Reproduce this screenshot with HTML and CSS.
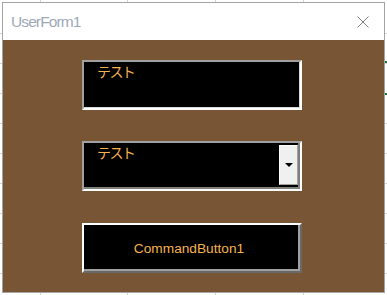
FILE: index.html
```html
<!DOCTYPE html>
<html lang="ja">
<head>
<meta charset="utf-8">
<title>UserForm1</title>
<link rel="stylesheet" href="styles.css">
</head>
<body>
<div class="window">
  <div class="titlebar">
    <span class="title">UserForm1</span>
    <svg class="close" width="12" height="12" viewBox="0 0 12 12" aria-hidden="true">
      <path d="M0.5 0.5 L11.5 11.5 M11.5 0.5 L0.5 11.5" stroke="#7c7c7c" stroke-width="1" fill="none"/>
    </svg>
  </div>
  <div class="client">
    <div class="textbox"><span class="jp">テスト</span></div>
    <div class="combo">
      <div class="combo-text"><span class="jp">テスト</span></div>
      <div class="drop"><span class="arrow"></span></div>
    </div>
    <div class="cmd">CommandButton1</div>
  </div>
</div>
</body>
</html>
```
FILE: styles.css
```css
html, body {
  margin: 0;
  padding: 0;
}
body {
  width: 387px;
  height: 295px;
  overflow: hidden;
  background-color: #ffffff;
  background-image:
    linear-gradient(#217346, #217346),
    linear-gradient(#217346, #217346),
    linear-gradient(#d4d4d4, #d4d4d4),
    linear-gradient(#d4d4d4, #d4d4d4),
    linear-gradient(#d4d4d4, #d4d4d4),
    linear-gradient(#d4d4d4, #d4d4d4),
    repeating-linear-gradient(180deg, transparent 0, transparent 29px, #d4d4d4 29px, #d4d4d4 30px);
  background-size: 10px 2px, 10px 2px, 1px 100%, 1px 100%, 1px 100%, 1px 100%, 100% 100%;
  background-position: 385px 61px, 385px 93px, 40px 0, 127px 0, 215px 0, 303px 0, 0 4px;
  background-repeat: no-repeat, no-repeat, no-repeat, no-repeat, no-repeat, no-repeat, repeat;
  font-family: "Liberation Sans", Arial, sans-serif;
}
.window {
  box-sizing: border-box;
  margin: 2px 0 0 2px;
  width: 383px;
  height: 291px;
  border: 1px solid #a4a4a4;
  background: #ffffff;
  display: flex;
  flex-direction: column;
}
.titlebar {
  height: 37px;
  flex: none;
  display: flex;
  align-items: center;
  justify-content: space-between;
  padding: 0 15px 0 8px;
}
.title {
  font-family: "Liberation Sans", Arial, sans-serif;
  font-size: 15.5px;
  letter-spacing: -0.9px;
  color: #9ea8b8;
  padding-top: 1px;
}
.close {
  display: block;
}
.client {
  flex: 1;
  background: #785535;
  display: flex;
  flex-direction: column;
  gap: 31px;
  padding: 20px 0 0 79px;
}
.jp {
  font-family: "Noto Sans CJK JP", sans-serif;
  font-size: 14px;
  line-height: 14px;
  letter-spacing: -1.6px;
  color: #f6b24c;
}
.textbox {
  box-sizing: border-box;
  width: 220px;
  height: 50px;
  background: #000000;
  border: 2px solid;
  border-color: #a0a0a0 #ffffff #ffffff #a0a0a0;
  box-shadow: inset -1px -1px 0 #d8d8d8;
  padding: 1px 0 0 13px;
}
.combo {
  box-sizing: border-box;
  width: 220px;
  height: 50px;
  background: #000000;
  border: 2px solid;
  border-color: #a0a0a0 #ffffff #ffffff #a0a0a0;
  box-shadow: inset -2px -2px 0 #808080;
  display: flex;
  padding: 2px 2px 2px 0;
}
.combo-text {
  flex: 1;
  margin-top: -1px;
  padding: 0 0 0 13px;
}
.drop {
  box-sizing: border-box;
  width: 19px;
  height: 40px;
  background: #f0f0f0;
  border: 1px solid;
  border-color: #ffffff #a0a0a0 #a0a0a0 #ffffff;
  display: flex;
  align-items: center;
  justify-content: center;
}
.arrow {
  width: 0;
  height: 0;
  border-left: 4px solid transparent;
  border-right: 4px solid transparent;
  border-top: 4px solid #000000;
}
.cmd {
  box-sizing: border-box;
  margin-top: 1px;
  width: 220px;
  height: 50px;
  background: #000000;
  border: 2px solid;
  border-color: #ffffff #696969 #696969 #ffffff;
  box-shadow: inset -2px -2px 0 #a0a0a0;
  display: flex;
  align-items: center;
  justify-content: center;
  padding-right: 6px;
  font-family: "Liberation Sans", Arial, sans-serif;
  font-size: 13.7px;
  color: #f6b24c;
}
```
